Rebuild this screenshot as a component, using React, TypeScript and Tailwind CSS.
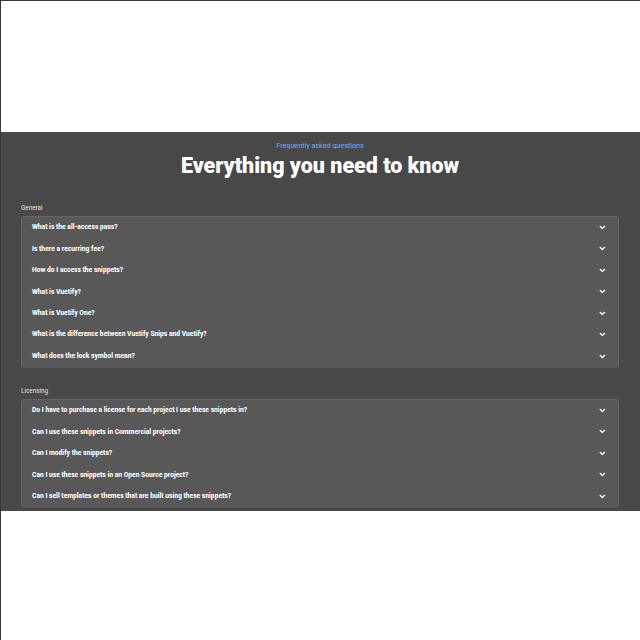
const sections = [
  {
    title: 'General',
    items: [
      'What is the all-access pass?',
      'Is there a recurring fee?',
      'How do I access the snippets?',
      'What is Vuetify?',
      'What is Vuetify One?',
      'What is the difference between Vuetify Snips and Vuetify?',
      'What does the lock symbol mean?',
    ],
  },
  {
    title: 'Licensing',
    items: [
      'Do I have to purchase a license for each project I use these snippets in?',
      'Can I use these snippets in Commercial projects?',
      'Can I modify the snippets?',
      'Can I use these snippets in an Open Source project?',
      'Can I sell templates or themes that are built using these snippets?',
    ],
  },
];

function Chevron() {
  return (
    <svg viewBox="0 0 24 24" className="size-[10.7px] shrink-0 fill-white stroke-white stroke-1">
      <path d="M7.41 8.58 12 13.17l4.59-4.59L18 10l-6 6-6-6z" />
    </svg>
  );
}

function Section({ title, items }: { title: string; items: string[] }) {
  return (
    <section>
      <h2 className="h-[14px] text-[6.35px] leading-[14px] text-[#e6e6e6]">{title}</h2>
      <div className="mt-[1px] rounded-[4px] border border-b-0 border-[#656565] bg-[#585858] pb-[0.6px]">
        {items.map((q) => (
          <button
            key={q}
            className="flex h-[21.45px] w-full items-center justify-between pr-[10px] pb-[0.8px] pl-[10px] text-left text-[6.7px] font-extrabold text-white"
          >
            <span className="whitespace-nowrap">{q}</span>
            <Chevron />
          </button>
        ))}
      </div>
    </section>
  );
}

export default function App() {
  return (
    <div className="h-[640px] w-[640px] overflow-hidden border-t border-l border-[#38363a] bg-white pt-[131px] font-['Roboto',sans-serif]">
      <main className="h-[379px] overflow-hidden bg-[#484848] pr-[21px] pl-[20px]">
        <header className="h-[69px] pt-[8px] text-center">
          <p className="text-[7.2px] leading-[11px] text-[#6cb0fa]">Frequently asked questions</p>
          <h1 className="mt-[3px] text-[21.45px] leading-[24px] font-black text-white">
            Everything you need to know
          </h1>
        </header>
        <div className="flex flex-col gap-[16.4px]">
          {sections.map((s) => (
            <Section key={s.title} {...s} />
          ))}
        </div>
      </main>
    </div>
  );
}
